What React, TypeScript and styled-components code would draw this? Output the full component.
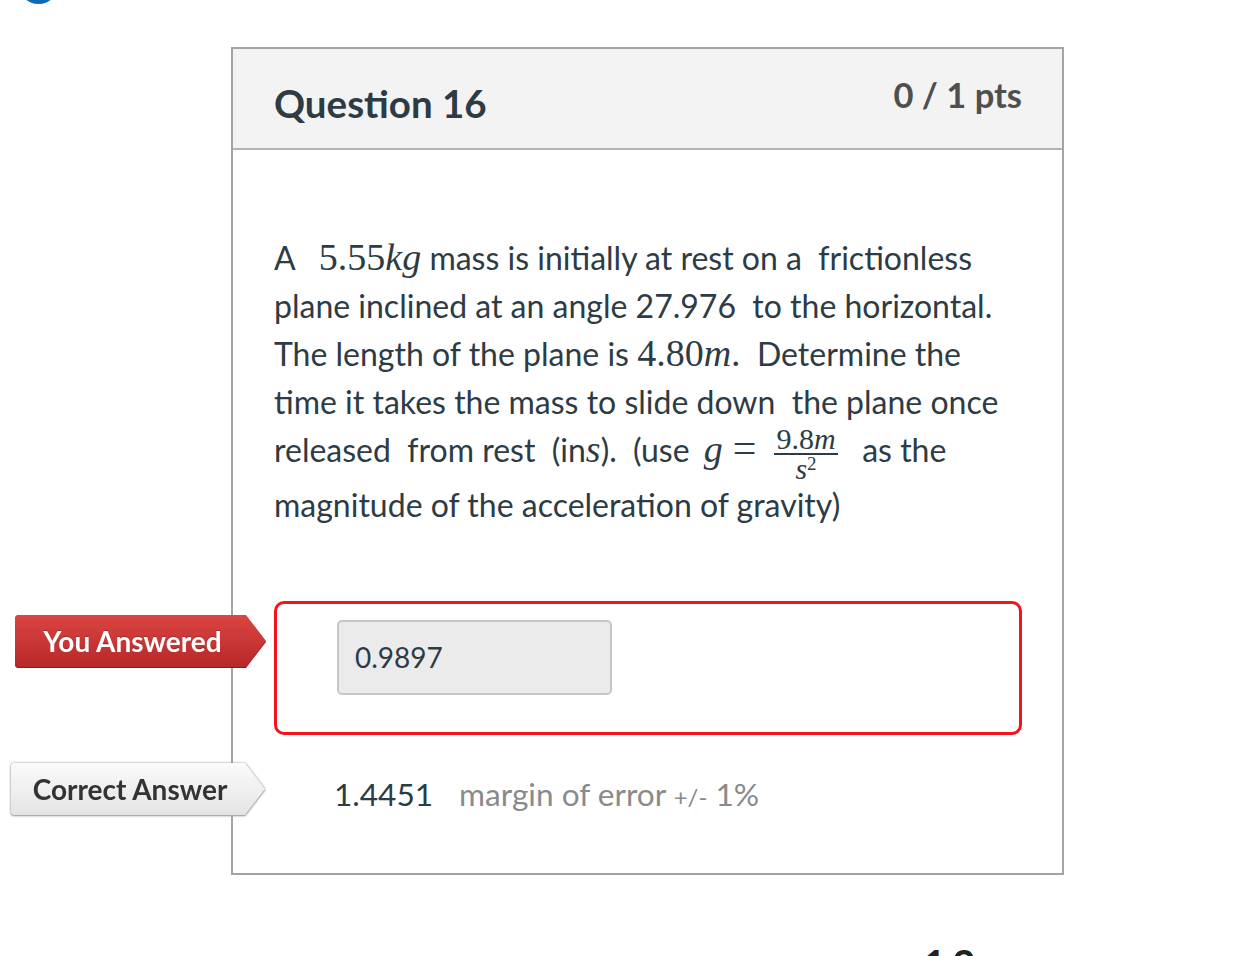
import React from "react";
import styled, { createGlobalStyle } from "styled-components";

const Global = createGlobalStyle`
  html, body { margin: 0; padding: 0; height: 100%; overflow: hidden; background: #ffffff; }
  body { font-family: Lato, "Noto Sans", sans-serif; color: #2d3b45; }
`;

const Page = styled.div`
  position: relative;
  padding: 47px 0 0 231px;
  width: 1256px;
  height: 956px;
  box-sizing: border-box;
`;

const CornerDot = styled.div`
  position: absolute;
  left: 18px;
  top: -37px;
  width: 41px;
  height: 41px;
  border-radius: 50%;
  background: #0f6bb3;
`;

const Card = styled.section`
  width: 833px;
  box-sizing: border-box;
  border: 2px solid #a4a4a4;
  background: #ffffff;
`;

const Header = styled.header`
  display: flex;
  justify-content: space-between;
  align-items: flex-start;
  height: 101px;
  box-sizing: border-box;
  padding: 0 40px 0 41px;
  background: #f3f3f3;
  border-bottom: 2px solid #b3b3b3;
`;

const Title = styled.h2`
  margin: 32px 0 0;
  font-size: 38.5px;
  line-height: 44px;
  font-weight: 700;
  color: #2d3b45;
`;

const Points = styled.div`
  margin-top: 26px;
  font-size: 34.5px;
  line-height: 40px;
  font-weight: 700;
  color: #4f4f4f;
`;

const Body = styled.div`
  padding: 84px 41px 52px 41px;
`;

const Prompt = styled.p`
  margin: 0;
  font-size: 32px;
  line-height: 48px;
  color: #2d3b45;
  white-space: nowrap;
`;

const MathVar = styled.span<{ $pad?: number }>`
  font-family: "Liberation Serif", "DejaVu Serif", serif;
  font-size: 38px;
  line-height: 1;
  margin-left: ${(p) => p.$pad ?? 0}px;
`;

const It = styled.i`
  font-style: italic;
`;

const Op = styled.span`
  font-family: "Liberation Serif", "DejaVu Serif", serif;
  font-size: 42px;
  line-height: 1;
  margin: 0 18px 0 10px;
`;

const Frac = styled.span`
  display: inline-flex;
  flex-direction: column;
  align-items: center;
  vertical-align: middle;
  font-family: "Liberation Serif", "DejaVu Serif", serif;
  font-size: 30px;
  line-height: 24px;
`;

const Num = styled.span`
  padding: 0 2px 2px;
  border-bottom: 2px solid #2d3b45;
`;

const Den = styled.span`
  padding-top: 2px;
`;

const Sup = styled.sup`
  font-size: 19px;
  vertical-align: 9px;
  line-height: 0;
`;

const AnswerRow = styled.div<{ $gap: number }>`
  position: relative;
  margin-top: ${(p) => p.$gap}px;
`;

const Tag = styled.div<{ $variant: "wrong" | "correct"; $left: number; $top: number }>`
  position: absolute;
  left: ${(p) => p.$left}px;
  top: ${(p) => p.$top}px;
  filter: ${(p) =>
    p.$variant === "wrong"
      ? "drop-shadow(0 1px 0 #8f1b1b)"
      : "drop-shadow(0 0 1px #9a9a9a) drop-shadow(0 1px 0 #b5b5b5)"};
`;

const TagShape = styled.div<{ $variant: "wrong" | "correct"; $width: number }>`
  width: ${(p) => p.$width}px;
  height: 52px;
  box-sizing: border-box;
  padding: 0 20px 0 4px;
  display: flex;
  align-items: center;
  justify-content: center;
  font-size: 28px;
  font-weight: 700;
  clip-path: polygon(0 2px, 2px 0, calc(100% - 20px) 0, 100% 50%, calc(100% - 20px) 100%, 2px 100%, 0 calc(100% - 2px));
  color: ${(p) => (p.$variant === "wrong" ? "#ffffff" : "#333333")};
  background: ${(p) =>
    p.$variant === "wrong"
      ? "linear-gradient(#db4543, #b72828)"
      : "linear-gradient(#fbfbfb, #e4e4e4)"};
  text-shadow: ${(p) => (p.$variant === "wrong" ? "0 -1px 0 rgba(0,0,0,0.25)" : "none")};
`;

const WrongBox = styled.div`
  width: 748px;
  height: 134px;
  box-sizing: border-box;
  border: 3px solid #f5121c;
  border-radius: 10px;
  padding: 16px 0 0 60px;
`;

const Field = styled.div`
  width: 275px;
  height: 75px;
  box-sizing: border-box;
  border: 2px solid #c6c6c6;
  border-radius: 5px;
  background: #ebebeb;
  display: flex;
  align-items: center;
  padding-left: 16px;
  font-size: 28px;
  color: #2d3b45;
`;

const CorrectLine = styled.div`
  padding-left: 60px;
  font-size: 31.6px;
  line-height: 48px;
  color: #2d3b45;
`;

const Margin = styled.span`
  margin-left: 26px;
  color: #8a8a8a;
`;

const Small = styled.span`
  font-size: 24px;
`;

const Pager = styled.div`
  margin: 69px 0 0 692px;
  font-size: 40px;
  line-height: 40px;
  font-weight: 700;
  color: #222222;
  letter-spacing: 6px;
`;

export default function App() {
  return (
    <>
      <Global />
      <Page>
        <CornerDot />
        <Card>
          <Header>
            <Title>Question 16</Title>
            <Points>0 / 1 pts</Points>
          </Header>
          <Body>
            <Prompt>
              A&nbsp;
              <MathVar $pad={16}>
                5.55<It>kg</It>
              </MathVar>{" "}
              mass is initially at rest on a&nbsp;&nbsp;frictionless
              <br />
              plane inclined at an angle 27.976&nbsp;&nbsp;to the horizontal.
              <br />
              The length of the plane is{" "}
              <MathVar>
                4.80<It>m</It>.
              </MathVar>
              &nbsp;&nbsp;Determine the
              <br />
              time it takes the mass to slide down&nbsp;&nbsp;the plane once
              <br />
              released&nbsp;&nbsp;from rest&nbsp;&nbsp;(in
              <MathVar>
                <It>s</It>
              </MathVar>
              ).&nbsp;&nbsp;(use&nbsp;
              <MathVar $pad={6}>
                <It>g</It>
              </MathVar>
              <Op>=</Op>
              <Frac>
                <Num>
                  9.8<It>m</It>
                </Num>
                <Den>
                  <It>s</It>
                  <Sup>2</Sup>
                </Den>
              </Frac>
              &nbsp;&nbsp;&nbsp;as the
              <br />
              magnitude of the acceleration of gravity)
            </Prompt>

            <AnswerRow $gap={72}>
              <Tag $variant="wrong" $left={-259} $top={14}>
                <TagShape $variant="wrong" $width={251}>
                  You Answered
                </TagShape>
              </Tag>
              <WrongBox>
                <Field>0.9897</Field>
              </WrongBox>
            </AnswerRow>

            <AnswerRow $gap={35}>
              <Tag $variant="correct" $left={-263} $top={-7}>
                <TagShape $variant="correct" $width={254}>
                  Correct Answer
                </TagShape>
              </Tag>
              <CorrectLine>
                1.4451
                <Margin>
                  margin of error <Small>+/-</Small> 1%
                </Margin>
              </CorrectLine>
            </AnswerRow>
          </Body>
        </Card>
        <Pager>12</Pager>
      </Page>
    </>
  );
}
